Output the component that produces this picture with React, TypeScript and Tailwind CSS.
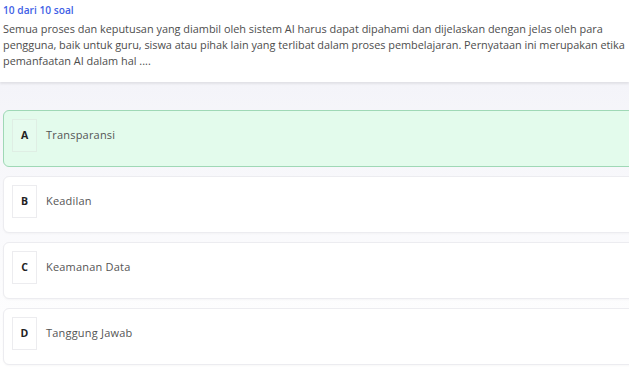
import React from "react";

const options = [
  { k: "A", t: "Transparansi", active: true },
  { k: "B", t: "Keadilan" },
  { k: "C", t: "Keamanan Data" },
  { k: "D", t: "Tanggung Jawab" },
];

export default function App() {
  return (
    <div
      className="w-[639px] h-[374px] bg-white overflow-hidden"
      style={{ fontFamily: "'Open Sans', 'Noto Sans', sans-serif" }}
    >
      <div className="w-[629px] h-[374px] overflow-hidden">
        <div className="bg-white px-[3px] pt-[2px] pb-[13px] shadow-[0_2px_2px_rgba(0,0,0,0.08)] relative z-10">
          <div className="text-[10.2px] leading-[16px] font-semibold text-[#3f5fe6]">10 dari 10 soal</div>
          <div className="mt-[3px] text-[10.9px] leading-[16px] text-[#4d4d4d] whitespace-nowrap">
            <div>Semua proses dan keputusan yang diambil oleh sistem AI harus dapat dipahami dan dijelaskan dengan jelas oleh para</div>
            <div className="tracking-[-0.03px]">pengguna, baik untuk guru, siswa atau pihak lain yang terlibat dalam proses pembelajaran. Pernyataan ini merupakan etika</div>
            <div>pemanfaatan AI dalam hal ....</div>
          </div>
        </div>
        <div className="bg-gradient-to-b from-[#f4f4f9] to-white pt-[28px] pl-[3px] flex flex-col gap-[9px]">
          {options.map((o) => (
            <div
              key={o.k}
              className={
                "h-[57px] mr-[-12px] rounded-[6px] border flex items-start pt-[8px] pl-[8px] " +
                (o.active
                  ? "bg-[#e3fbec] border-[#9fd8b6]"
                  : "bg-white border-[#ececf0] shadow-[0_1px_2px_rgba(0,0,0,0.03)]")
              }
            >
              <div
                className={
                  "w-[25px] h-[33px] border flex items-center justify-center text-[10.5px] font-bold text-[#222] " +
                  (o.active ? "border-[#dfeee4] bg-[#e6fbee]" : "border-[#ececef] bg-white")
                }
              >
                {o.k}
              </div>
              <div className="ml-[9px] h-[33px] flex items-center text-[11px] text-[#555] tracking-[0.2px]">{o.t}</div>
            </div>
          ))}
        </div>
      </div>
    </div>
  );
}
